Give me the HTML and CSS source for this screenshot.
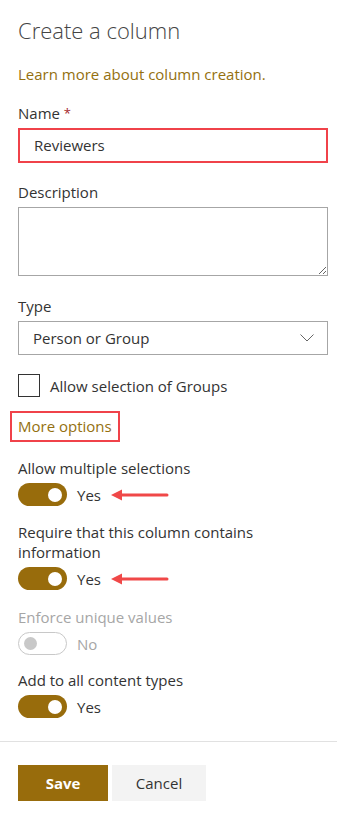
FILE: index.html
```html
<!DOCTYPE html>
<html lang="en">
  <head>
    <meta charset="UTF-8" />
    <meta name="viewport" content="width=device-width, initial-scale=1.0" />
    <title>Create a column</title>
    <link rel="stylesheet" href="styles.css">
  </head>
  <body>
    <div class="panel">
      <h1 class="title">Create a column</h1>
      <a class="learn-link" href="#">Learn more about column creation.</a>

      <div class="field">
        <div class="label">Name <span class="required">*</span></div>
        <div class="text-input highlight">Reviewers</div>
      </div>

      <div class="field">
        <div class="label">Description</div>
        <textarea class="textarea"></textarea>
      </div>

      <div class="field type-field">
        <div class="label">Type</div>
        <div class="dropdown">
          <span>Person or Group</span>
          <svg class="chevron" width="14" height="8" viewBox="0 0 14 8">
            <path d="M0.5 0.5 L7 7 L13.5 0.5" fill="none" stroke="#666" stroke-width="1" />
          </svg>
        </div>
      </div>

      <label class="checkbox-row">
        <span class="checkbox"></span>
        <span>Allow selection of Groups</span>
      </label>

      <a class="more-options" href="#">More options</a>

      <div class="option">
        <div class="label">Allow multiple selections</div>
        <div class="toggle-row">
          <span class="toggle on"><span class="knob"></span></span>
          <span class="toggle-text">Yes</span>
          <svg class="arrow" width="58" height="12" viewBox="0 0 58 12">
            <path d="M0 6 L11 0.5 L11 11.5 Z" fill="#f04848" />
            <path d="M9 6 L56 6" stroke="#f04848" stroke-width="3" stroke-linecap="round" />
          </svg>
        </div>
      </div>

      <div class="option">
        <div class="label">Require that this column contains information</div>
        <div class="toggle-row">
          <span class="toggle on"><span class="knob"></span></span>
          <span class="toggle-text">Yes</span>
          <svg class="arrow" width="58" height="12" viewBox="0 0 58 12">
            <path d="M0 6 L11 0.5 L11 11.5 Z" fill="#f04848" />
            <path d="M9 6 L56 6" stroke="#f04848" stroke-width="3" stroke-linecap="round" />
          </svg>
        </div>
      </div>

      <div class="option disabled">
        <div class="label">Enforce unique values</div>
        <div class="toggle-row">
          <span class="toggle off"><span class="knob"></span></span>
          <span class="toggle-text">No</span>
        </div>
      </div>

      <div class="option last">
        <div class="label">Add to all content types</div>
        <div class="toggle-row">
          <span class="toggle on"><span class="knob"></span></span>
          <span class="toggle-text">Yes</span>
        </div>
      </div>
    </div>

    <footer class="actions">
      <button class="btn primary">Save</button>
      <button class="btn cancel">Cancel</button>
    </footer>
  </body>
</html>
```

FILE: styles.css
```css
:root {
  font-family: "Open Sans", sans-serif;
  font-size: 15px;
  line-height: 20px;
  color: #333;
  box-sizing: border-box;
}

*,
::before,
::after {
  box-sizing: inherit;
}

body {
  margin: 0;
  background: #fff;
}

.panel {
  padding: 14px 9px 0 18px;
}

.title {
  margin: 0;
  font-size: 22px;
  line-height: 32px;
  font-weight: 300;
  color: #444;
}

.learn-link {
  display: block;
  margin-top: 18px;
  color: #94700f;
  text-decoration: none;
}

.field {
  margin-top: 19px;
}

.type-field {
  margin-top: 20px;
}

.label {
  margin-bottom: 5px;
}

.required {
  color: #a4262c;
  font-size: 13px;
  vertical-align: top;
}

.text-input {
  height: 35px;
  border: 1px solid #a6a6a6;
  padding: 0 14px;
  line-height: 31px;
}

.text-input.highlight {
  border: 2px solid #f0424a;
}

.textarea {
  display: block;
  width: 100%;
  height: 69px;
  margin: 0;
  border: 1px solid #a6a6a6;
  font: inherit;
  resize: vertical;
}

.dropdown {
  display: flex;
  align-items: center;
  justify-content: space-between;
  height: 34px;
  border: 1px solid #a6a6a6;
  padding: 0 13px 0 14px;
}

.checkbox-row {
  display: flex;
  align-items: center;
  gap: 10px;
  margin-top: 19px;
}

.checkbox {
  width: 22px;
  height: 23px;
  border: 1px solid #333;
}

.more-options {
  display: inline-block;
  margin: 14px 0 0 -8px;
  padding: 3px 6px 4px;
  border: 2px solid #f0424a;
  color: #94700f;
  text-decoration: none;
}

.option {
  margin-top: 16px;
}

.option + .option {
  margin-top: 16px;
}

.option.disabled {
  margin-top: 17px;
}

.option.last {
  margin-top: 15px;
}

.toggle-row {
  display: flex;
  align-items: center;
}

.toggle {
  display: flex;
  align-items: center;
  justify-content: flex-end;
  width: 49px;
  height: 23px;
  border-radius: 12px;
  padding: 0 5px;
}

.toggle.on {
  background: #986c0c;
}

.toggle.on .knob {
  width: 14px;
  height: 14px;
  border-radius: 50%;
  background: #fff;
}

.toggle.off {
  justify-content: flex-start;
  border: 1px solid #c8c8c8;
}

.toggle.off .knob {
  width: 13px;
  height: 13px;
  border-radius: 50%;
  background: #c8c8c8;
}

.toggle-text {
  margin-left: 10px;
}

.arrow {
  margin-left: 10px;
}

.disabled {
  color: #a6a6a6;
}

.actions {
  display: flex;
  gap: 4px;
  margin-top: 23px;
  padding: 23px 18px;
  border-top: 1px solid #e1e1e1;
}

.btn {
  height: 36px;
  width: 90px;
  padding: 0;
  border: none;
  background: #f3f3f3;
  font: inherit;
  color: #333;
}

.btn.cancel {
  width: 94px;
}

.btn.primary {
  background: #986c0c;
  color: #fff;
  font-weight: 700;
}
```
